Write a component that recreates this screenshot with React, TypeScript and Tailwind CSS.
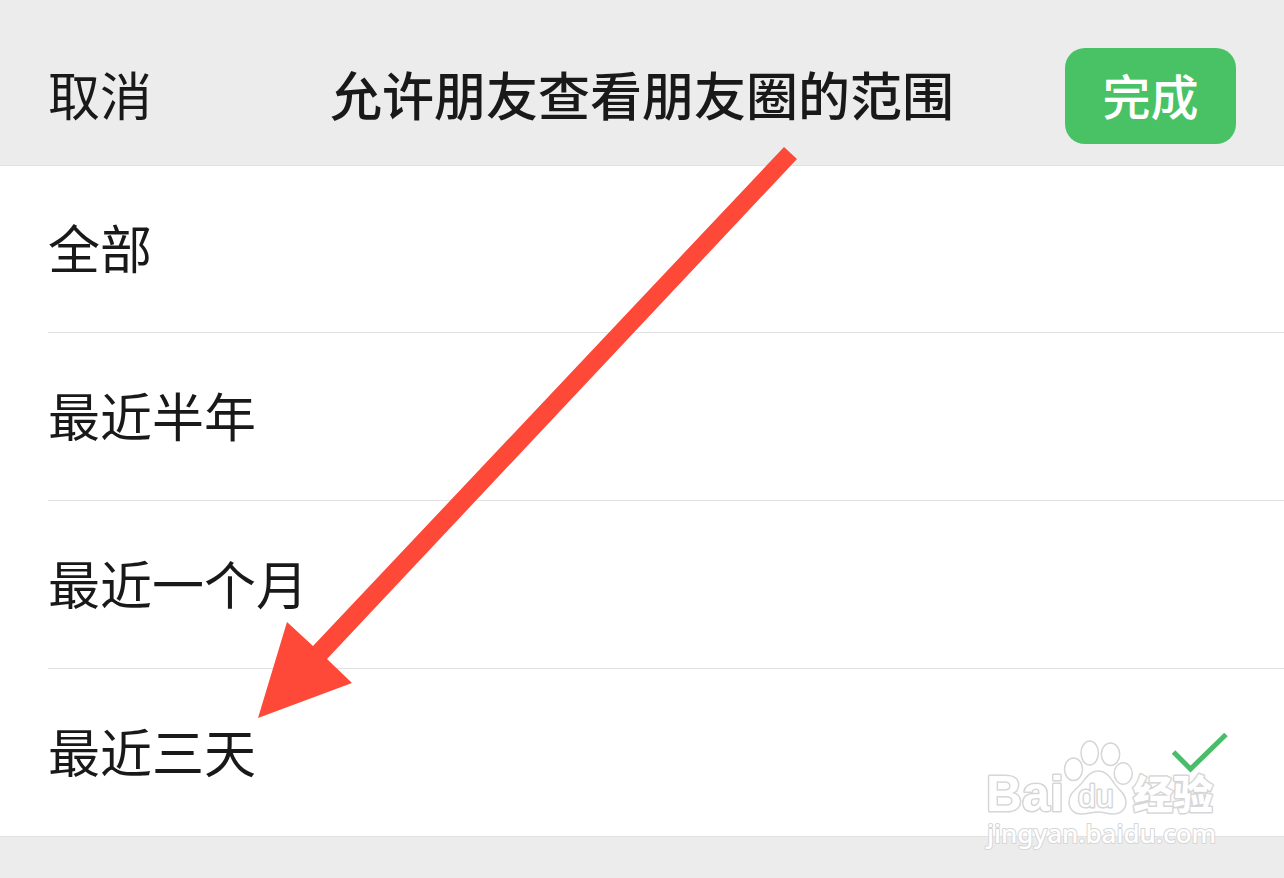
import { useState } from "react";

const ranges = ["全部", "最近半年", "最近一个月", "最近三天"];

function Header() {
  return (
    <header className="grid h-[165px] grid-cols-[1fr_auto_1fr] items-start px-12 pt-12">
      <button type="button" className="h-24 justify-self-start pb-1 text-[52px] leading-[92px]">
        取消
      </button>
      <h1 className="text-[52px] leading-[92px] font-medium">允许朋友查看朋友圈的范围</h1>
      <button
        type="button"
        className="h-24 w-[171px] justify-self-end rounded-[20px] bg-[#49c265] pb-1 text-[48px] leading-[92px] font-medium text-white"
      >
        完成
      </button>
    </header>
  );
}

function CheckMark() {
  return (
    <svg
      viewBox="0 0 56 40"
      className="invisible mr-14 h-10 w-14 peer-checked:visible"
      fill="none"
      stroke="#49bd6a"
      strokeWidth="5"
      aria-hidden="true"
    >
      <path d="M1.5 19 L18.5 36 L54 1.5" />
    </svg>
  );
}

function Arrow() {
  return (
    <svg
      viewBox="0 0 540 572"
      className="pointer-events-none absolute top-[147px] left-[258px] h-[572px] w-[540px]"
      aria-hidden="true"
    >
      <path fill="#fe4838" d="M0 571 L29 475 L55 499 L526 0 L539 12 L69 512 L94 536 Z" />
    </svg>
  );
}

function Watermark() {
  return (
    <svg
      viewBox="0 0 244 120"
      className="pointer-events-none absolute top-[735px] right-[60px] h-[120px] w-[244px]"
      fill="#ffffff"
      stroke="#d6d6d6"
      strokeWidth="1.5"
      strokeLinejoin="round"
    >
      <ellipse cx="93.5" cy="34.3" rx="9" ry="11.3" />
      <ellipse cx="109.7" cy="18" rx="8.7" ry="12" />
      <ellipse cx="130.5" cy="19.2" rx="9.2" ry="11.3" />
      <ellipse cx="143.2" cy="38.5" rx="9" ry="10.8" />
      <path d="M118 36 C126 36 130 42 134 48 C138 55 146 58 146 67 C146 75 140 79 133 79 C127 79 124 77 118 77 C112 77 108 79 101 79 C94 79 89 74 89 67 C89 59 95 55 101 49 C106 43 110 36 118 36 Z" />
      <g style={{ paintOrder: "stroke" }} strokeWidth="3">
        <text x="6" y="76" className="font-['Liberation_Sans'] text-[50px] font-bold">
          Bai
        </text>
        <text x="98" y="72" className="font-['Liberation_Sans'] text-[32px]">
          du
        </text>
        <text x="153" y="74" className="font-['Noto_Sans_CJK_SC'] text-[40px] font-black">
          经验
        </text>
        <text x="7" y="108" strokeWidth="2" className="font-['Noto_Sans'] text-[26px] font-medium">
          jingyan.baidu.com
        </text>
      </g>
    </svg>
  );
}

export default function App() {
  const [selected, setSelected] = useState("最近三天");

  return (
    <div className="relative min-h-screen overflow-hidden bg-[#ececec] font-['Noto_Sans_CJK_SC',sans-serif] text-[#191919]">
      <Header />
      <ul className="bg-white">
        {ranges.map((range) => (
          <li key={range} className="group border-[#e2e2e2] first:border-t last:border-b">
            <label className="ml-12 flex h-[168px] items-center justify-between border-b border-[#e2e2e2] text-[52px] leading-[72px] group-first:h-[167px] group-last:h-[167px] group-last:border-b-0">
              <span className="pb-1">{range}</span>
              <input
                type="radio"
                name="range"
                value={range}
                checked={selected === range}
                onChange={() => setSelected(range)}
                className="peer sr-only"
              />
              <CheckMark />
            </label>
          </li>
        ))}
      </ul>
      <Arrow />
      <Watermark />
    </div>
  );
}
